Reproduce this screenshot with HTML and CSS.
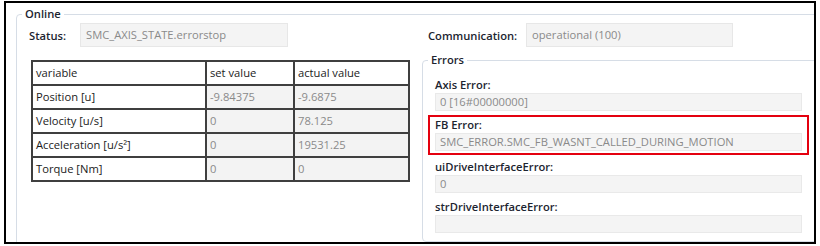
FILE: index.html
```html
<!DOCTYPE html>
<html>
<head>
<meta charset="utf-8">
<link rel="stylesheet" href="styles.css">
</head>
<body>
<div class="frame">
  <fieldset class="group online">
    <legend class="legend">Online</legend>
    <div class="cols">
      <div class="col-left">
        <div class="row">
          <span class="lbl status-lbl">Status:</span>
          <div class="box status-box">SMC_AXIS_STATE.errorstop</div>
        </div>
        <table class="grid">
          <tr class="head"><td class="c1">variable</td><td class="c2">set value</td><td class="c3">actual value</td></tr>
          <tr><td class="c1">Position [u]</td><td class="val">-9.84375</td><td class="val">-9.6875</td></tr>
          <tr><td class="c1">Velocity [u/s]</td><td class="val">0</td><td class="val">78.125</td></tr>
          <tr><td class="c1">Acceleration [u/s²]</td><td class="val">0</td><td class="val">19531.25</td></tr>
          <tr><td class="c1">Torque [Nm]</td><td class="val">0</td><td class="val">0</td></tr>
        </table>
      </div>
      <div class="col-right">
        <div class="row">
          <span class="lbl comm-lbl">Communication:</span>
          <div class="box comm-box">operational (100)</div>
        </div>
        <fieldset class="group errors">
          <legend class="legend err-legend">Errors</legend>
          <div class="field">
            <div class="flbl">Axis Error:</div>
            <div class="fbox">0 [16#00000000]</div>
          </div>
          <div class="field hilite">
            <div class="flbl">FB Error:</div>
            <div class="fbox">SMC_ERROR.SMC_FB_WASNT_CALLED_DURING_MOTION</div>
          </div>
          <div class="field">
            <div class="flbl">uiDriveInterfaceError:</div>
            <div class="fbox">0</div>
          </div>
          <div class="field">
            <div class="flbl">strDriveInterfaceError:</div>
            <div class="fbox"></div>
          </div>
        </fieldset>
      </div>
    </div>
  </fieldset>
</div>
</body>
</html>
```
FILE: styles.css
```css
html, body {
  margin: 0;
  padding: 0;
  background: #ffffff;
}
body {
  font-family: "Open Sans", "Noto Sans", sans-serif;
  font-size: 11.2px;
  color: #1b1b1b;
}
.frame {
  margin: 1px 0 0 4px;
  width: 812px;
  height: 243px;
  box-sizing: border-box;
  border: 2px solid #000000;
  overflow: hidden;
}
.group {
  border: 1px solid #d6dde6;
  border-radius: 4px;
  margin: 0;
  min-width: 0;
}
.legend {
  padding: 0 3px;
  line-height: 16px;
  font-weight: 600;
  color: #1c2430;
}
.online {
  margin: 3px 0 0 10px;
  padding: 1px 10px 20px 12px;
  width: 789px;
}
.online > .legend {
  margin-left: -7px;
}
.cols {
  display: flex;
}
.col-left {
  width: 393px;
  flex: none;
}
.col-right {
  width: 396px;
  flex: none;
}
.row {
  display: flex;
  align-items: center;
  height: 24px;
}
.lbl {
  font-weight: 600;
  color: #1c2430;
}
.status-lbl {
  width: 51px;
}
.comm-lbl {
  margin-left: 6px;
  width: 98px;
}
.box {
  box-sizing: border-box;
  height: 24px;
  line-height: 22px;
  padding-left: 5px;
  background: #f4f4f4;
  border: 1px solid #e7e7e7;
  color: #8a8a8a;
}
.status-box {
  width: 208px;
}
.comm-box {
  width: 207px;
}
.grid {
  margin: 13px 0 0 2px;
  width: 379px;
  border-collapse: collapse;
}
.grid td {
  border: 2px solid #3f3f3f;
  height: 22px;
  padding: 0 0 0 3px;
  line-height: 22px;
  color: #1b1b1b;
}
.grid .c1 {
  width: 169px;
}
.grid .c2 {
  width: 83px;
}
.grid td.val {
  background: #f3f3f3;
  color: #8a8a8a;
}
.errors {
  margin-top: 5px;
  padding: 5px 15px 6px 12px;
}
.err-legend {
  margin-left: -7px;
}
.field {
  margin-bottom: 2px;
}
.flbl {
  padding-top: 4px;
  line-height: 16px;
  font-weight: 600;
  color: #1c2430;
}
.fbox {
  box-sizing: border-box;
  height: 18px;
  line-height: 16px;
  padding-left: 4px;
  background: #f4f4f4;
  border: 1px solid #e9e9e9;
  color: #8a8a8a;
}
.hilite {
  margin: 4px -7px 0;
  padding: 0 5px 2px;
  border: 2px solid #e4000f;
}
.hilite .flbl {
  padding-top: 0;
}
```
